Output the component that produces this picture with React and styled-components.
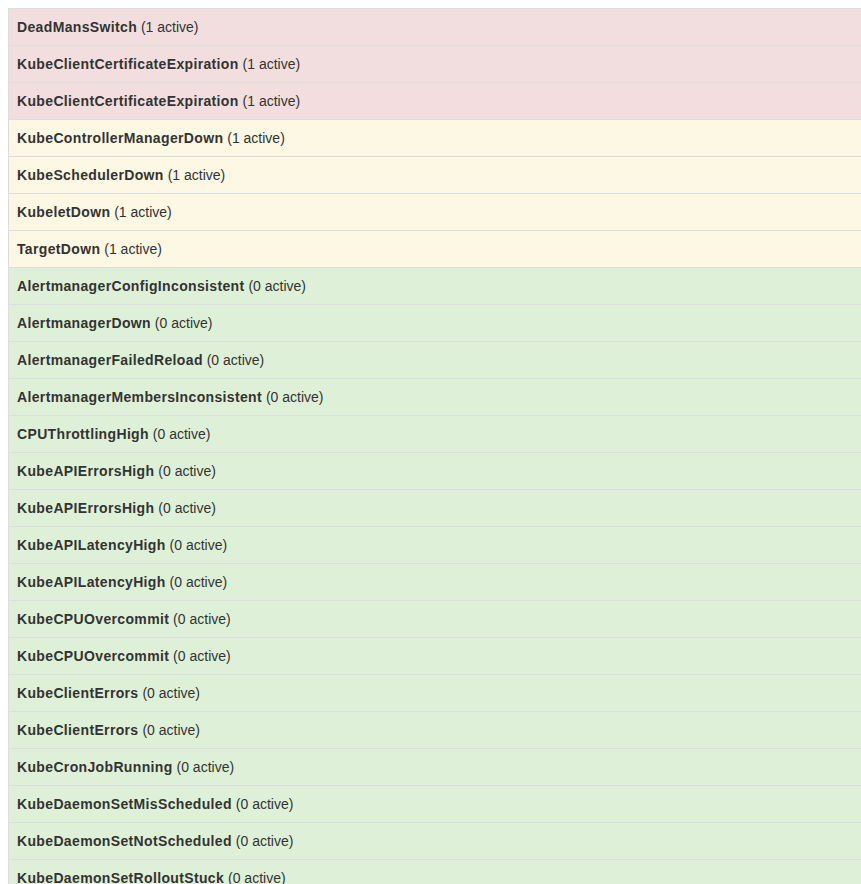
import React from "react";
import styled, { createGlobalStyle } from "styled-components";

const Global = createGlobalStyle`
  html { overflow: hidden; }
  body {
    margin: 8px 0 8px 8px;
    font-family: "Liberation Sans", Arial, Helvetica, sans-serif;
    font-size: 14px;
    line-height: 20px;
    color: #333;
    background: #fff;
  }
`;

const Wrap = styled.div`
  width: 870px;
`;

const Table = styled.table`
  width: 100%;
  border-collapse: collapse;
  border-spacing: 0;
  border: 1px solid #ddd;
`;

const bg = { danger: "#f2dede", warning: "#fcf8e3", success: "#dff0d8" };

const Row = styled.tr`
  background: ${(p) => bg[p.$state]};
`;

const Cell = styled.td`
  padding: 8px;
  border: 1px solid #ddd;
  line-height: 20px;
  vertical-align: top;
  white-space: nowrap;
`;

const Name = styled.b`
  font-weight: bold;
  letter-spacing: 0.35px;
`;

const rows = [
  ["DeadMansSwitch", 1, "danger"],
  ["KubeClientCertificateExpiration", 1, "danger"],
  ["KubeClientCertificateExpiration", 1, "danger"],
  ["KubeControllerManagerDown", 1, "warning"],
  ["KubeSchedulerDown", 1, "warning"],
  ["KubeletDown", 1, "warning"],
  ["TargetDown", 1, "warning"],
  ["AlertmanagerConfigInconsistent", 0, "success"],
  ["AlertmanagerDown", 0, "success"],
  ["AlertmanagerFailedReload", 0, "success"],
  ["AlertmanagerMembersInconsistent", 0, "success"],
  ["CPUThrottlingHigh", 0, "success"],
  ["KubeAPIErrorsHigh", 0, "success"],
  ["KubeAPIErrorsHigh", 0, "success"],
  ["KubeAPILatencyHigh", 0, "success"],
  ["KubeAPILatencyHigh", 0, "success"],
  ["KubeCPUOvercommit", 0, "success"],
  ["KubeCPUOvercommit", 0, "success"],
  ["KubeClientErrors", 0, "success"],
  ["KubeClientErrors", 0, "success"],
  ["KubeCronJobRunning", 0, "success"],
  ["KubeDaemonSetMisScheduled", 0, "success"],
  ["KubeDaemonSetNotScheduled", 0, "success"],
  ["KubeDaemonSetRolloutStuck", 0, "success"],
  ["KubeDeploymentGenerationMismatch", 0, "success"],
  ["KubeDeploymentReplicasMismatch", 0, "success"],
];

export default function App() {
  return (
    <>
      <Global />
      <Wrap>
        <Table>
          <tbody>
            {rows.map(([name, n, s], i) => (
              <Row key={i} $state={s}>
                <Cell>
                  <Name>{name}</Name> ({n} active)
                </Cell>
              </Row>
            ))}
          </tbody>
        </Table>
      </Wrap>
    </>
  );
}
